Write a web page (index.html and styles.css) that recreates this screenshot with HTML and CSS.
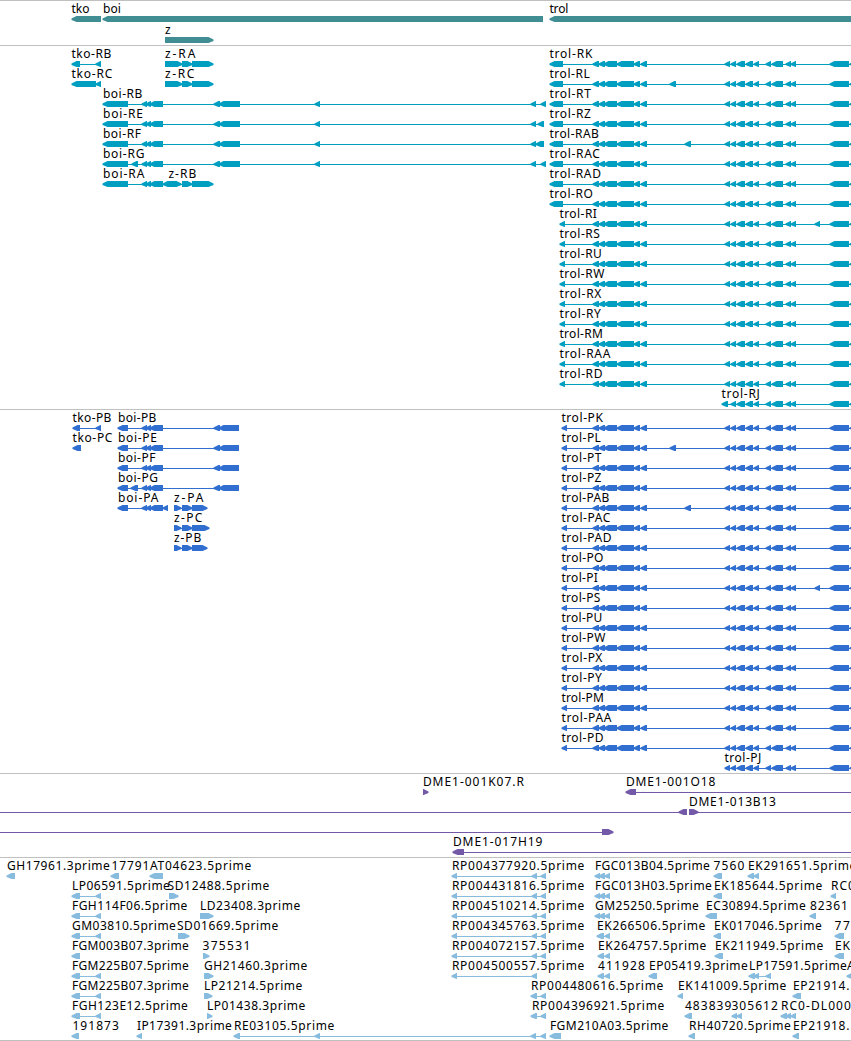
FILE: index.html
```
<!DOCTYPE html>
<html lang="en">
<head>
  <meta charset="UTF-8" />
  <title>Genome region: tko - trol</title>
  <link rel="stylesheet" href="styles.css">
</head>
<body>
  <div class="viewer">
    <div class="track genes" data-track="genes"></div>
    <div class="track transcripts" data-track="transcripts"></div>
    <div class="track proteins" data-track="proteins"></div>
    <div class="track clones" data-track="clones"></div>
    <div class="track ests" data-track="ests"></div>
  </div>
  <script src="tracks.js"></script>
</body>
</html>
```
FILE: styles.css
```
body {
  margin: 0;
  background: #fff;
  overflow: hidden;
}
.viewer {
  width: 851px;
  height: 1041px;
  overflow: hidden;
}
.track {
  box-sizing: border-box;
  border-top: 1px solid #c0c0c0;
  overflow: hidden;
}
.track svg {
  display: block;
}
.genes {
  height: 45px;
  color: #408e94;
}
.transcripts {
  height: 364px;
  color: #009fc1;
}
.proteins {
  height: 364px;
  color: #306fd0;
}
.clones {
  height: 84px;
  color: #7459a8;
}
.ests {
  height: 184px;
  color: #88bcdf;
  border-bottom: 1px solid #c0c0c0;
}
.label {
  font-family: "Noto Sans", "Open Sans", sans-serif;
  font-size: 12px;
  fill: #000;
}
.line {
  fill: currentColor;
  shape-rendering: crispEdges;
}
.block {
  fill: currentColor;
}
```
FILE: tracks.js
```
// feature: [row, label, label x, label width, direction, blocks]
var MID = " 593-599 599-605 604-617 617-634 634-640 641-647 ";
var TAIL = " 731-736 737-745 746-753 754-759 766-771 772-783 786-791 791-796 830-849 850-858";
var REST = " 725-730" + TAIL;

var tracks = {
  genes: [
    [0, "tko", 72, 18, "<", "72-101"],
    [0, "boi", 103.5, 18, "<", "103-543"],
    [0, "trol", 550, 19, "<", "550-860"],
    [1, "z", 165.5, 6, ">", "165-213"]
  ],
  transcripts: [
    [0, "tko-RB", 72, 40, "<", "72-80 96-101"],
    [0, "z-RA", 165.5, 30.5, ">", "165-182 182-192 192-213"],
    [1, "tko-RC", 72, 41, "<", "72-96 96-101"],
    [1, "z-RC", 165.5, 29.5, ">", "165-182 182-192 192-213"],
    [2, "boi-RB", 103.5, 39.5, "<", "103-128 142-147 146-151 150-163 214-220 219-240 315-320 531-536 541-546"],
    [3, "boi-RE", 103.5, 40, "<", "103-128 142-147 146-151 150-163 214-220 219-240 315-320 531-536 538-544"],
    [4, "boi-RF", 103.5, 38, "<", "103-128 142-147 146-151 150-163 214-220 219-240 315-320 531-536 536-544"],
    [5, "boi-RG", 103.5, 41.5, "<", "103-128 132-138 142-147 146-151 150-163 214-220 219-240 315-320 531-536 541-546"],
    [6, "boi-RA", 103.5, 41.5, "<", "103-128 142-147 146-151 150-163 163-170"],
    [6, "z-RB", 169, 28, ">", "168-181 182-192 192-213"]
  ],
  proteins: [
    [0, "tko-PB", 73, 39, "<", "73-80 96-101"],
    [1, "tko-PC", 73, 40, "<", "73-81"],
    [0, "boi-PB", 118.5, 38.5, "<", "118-128 142-147 146-151 150-163 214-220 219-239"],
    [1, "boi-PE", 118.5, 39, "<", "118-128 142-147 146-151 150-163 214-220 219-239"],
    [2, "boi-PF", 118.5, 37.5, "<", "118-128 142-147 146-151 150-163 214-220 219-239"],
    [3, "boi-PG", 118.5, 40, "<", "118-128 131-138 142-147 146-151 150-163 214-220 219-239"],
    [4, "boi-PA", 118.5, 40.5, "<", "118-128 142-147 146-151 150-163 163-168"],
    [4, "z-PA", 174.5, 29.5, ">", "174-181 182-192 192-207"],
    [5, "z-PC", 174.5, 28.5, ">", "174-181 182-192 192-209"],
    [6, "z-PB", 174.5, 27.5, ">", "174-181 182-192 192-207"]
  ],
  clones: [
    [0, "DME1-001K07.R", 423.5, 101, ">", "423-428"],
    [0, "DME1-001O18", 626.5, 89.5, "<", "626-636 900-905"],
    [1, "", 0, 0, "<", "-20--15 679-687"],
    [1, "DME1-013B13", 689.5, 87, ">", "689-698 900-905"],
    [2, "", 0, 0, ">", "-20--15 602-613"],
    [3, "DME1-017H19", 453.5, 89.5, "<", "453-464 900-905"]
  ],
  ests: [
    [0, "GH17961.3prime", 7.5, 103, "<", "7-15"],
    [0, "17791", 112, 38, "<", "111-119"],
    [0, "AT04623.5prime", 150.5, 101.5, "<", "150-163"],
    [0, "RP004377920.5prime", 452.5, 132.5, "<", "452-457 532-537 541-546"],
    [0, "FGC013B04.5prime", 595.5, 115, "<", "595-600 599-605 605-610"],
    [0, "7560", 714, 31, "<", "714-722"],
    [0, "EK291651.5prime", 748.5, 108.5, "<", "748-754 754-759"],
    [1, "LP06591.5prime", 72.5, 98, "<", "72-80 96-101"],
    [1, "SD12488.5prime", 168, 102, ">", "169-178"],
    [1, "RP004431816.5prime", 452.5, 132.5, "<", "452-457 532-537 541-546"],
    [1, "FGC013H03.5prime", 595.5, 117, "<", "595-600 599-605 605-610"],
    [1, "EK185644.5prime", 714.5, 108.5, "<", "714-722"],
    [1, "RC0", 831.5, 24, "<", "831-836"],
    [2, "FGH114F06.5prime", 72.5, 115.5, "<", "72-80 96-101"],
    [2, "LD23408.3prime", 200.5, 100.5, ">", "200-213"],
    [2, "RP004510214.5prime", 452.5, 132.5, "<", "452-457 532-537 541-546"],
    [2, "GM25250.5prime", 595.5, 104, "<", "595-600 599-605 605-610"],
    [2, "EC30894.5prime", 706.5, 100, "<", "706-717"],
    [2, "82361", 810.5, 38, "<", "810-816"],
    [3, "GM03810.5prime", 72.5, 104, "<", "72-80 96-101"],
    [3, "SD01669.5prime", 177.5, 101.5, ">", "178-189"],
    [3, "RP004345763.5prime", 452.5, 132.5, "<", "452-457 532-537 541-546"],
    [3, "EK266506.5prime", 597.5, 108.5, "<", "597-604 605-610"],
    [3, "EK017046.5prime", 714.5, 108, "<", "714-721"],
    [3, "77", 835, 15.5, "<", "835-844"],
    [4, "FGM003B07.3prime", 72.5, 117, "<", "72-80"],
    [4, "375531", 203, 48, ">", "203-209"],
    [4, "RP004072157.5prime", 452.5, 132.5, "<", "452-457 532-537 541-546"],
    [4, "EK264757.5prime", 598.5, 108.5, "<", "598-604 605-610"],
    [4, "EK211949.5prime", 715.5, 108.5, "<", "715-723"],
    [4, "EK", 835.5, 15, "<", "835-844"],
    [5, "FGM225B07.5prime", 72.5, 117, "<", "72-80 96-101"],
    [5, "GH21460.3prime", 204.5, 103.5, ">", "204-213"],
    [5, "RP004500557.5prime", 452.5, 132.5, "<", "452-457 532-537"],
    [5, "411928", 598.5, 47, "<", "598-604 605-610"],
    [5, "EP05419.3prime", 649.5, 99, "<", "649-657"],
    [5, "LP17591.5prime", 749.5, 98, "<", "749-755 754-759 766-771"],
    [5, "A", 847.5, 8, "<", "847-856"],
    [6, "FGM225B07.3prime", 72.5, 117, "<", "72-80 96-101"],
    [6, "LP21214.5prime", 204.5, 98.5, ">", "204-212"],
    [6, "RP004480616.5prime", 531.5, 132.5, "<", "531-537 541-546"],
    [6, "EK141009.5prime", 678.5, 108.5, "<", "678-683"],
    [6, "EP21914.", 793.5, 56.5, "<", "793-801"],
    [7, "FGH123E12.5prime", 72.5, 116, "<", "72-80 96-101"],
    [7, "LP01438.3prime", 207.5, 98.5, ">", "207-212"],
    [7, "RP004396921.5prime", 532.5, 132.5, "<", "531-537 541-546"],
    [7, "483839", 685.5, 46.5, "<", "685-692"],
    [7, "305612", 732, 46.5, "<", "732-737 737-742"],
    [7, "RC0-DL000", 781.5, 70, "<", "781-787 786-791 791-796"],
    [8, "191873", 73, 46.5, "<", "72-79"],
    [8, "IP17391.3prime", 137.5, 95, "<", "137-142"],
    [8, "RE03105.5prime", 234.5, 100.5, "<", "234-240 315-320 531-536 541-546"],
    [8, "FGM210A03.5prime", 550.5, 118.5, "<", "550-561"],
    [8, "RH40720.5prime", 689.5, 102, "<", "689-695"],
    [8, "EP21918.", 793.5, 56.5, "<", "793-799"]
  ]
};

// trol isoforms: name, label width, first block, extra block
var trolR = [
  ["RK", 43, "550-563"], ["RL", 40.5, "550-563", "670-676"], ["RT", 41.5, "550-563"],
  ["RZ", 41.5, "550-563"], ["RAB", 49.5, "550-563", "685-691"], ["RAC", 50.5, "550-563"],
  ["RAD", 51.5, "550-563"], ["RO", 43.5, "550-563"], ["RI", 37.5, "560-565", "815-820"],
  ["RS", 40.5, "560-565"], ["RU", 42.5, "560-565"], ["RW", 45, "560-565"],
  ["RX", 42, "560-565"], ["RY", 41.5, "560-565"], ["RM", 43.5, "560-565"],
  ["RAA", 51, "560-565"], ["RD", 43, "560-565"]
];
var trolP = [
  ["PK", 41.5], ["PL", 39.5, "", "670-676"], ["PT", 40], ["PZ", 40],
  ["PAB", 48, "", "685-691"], ["PAC", 49], ["PAD", 50], ["PO", 42],
  ["PI", 36.5, "", "815-820"], ["PS", 39], ["PU", 41], ["PW", 44],
  ["PX", 41], ["PY", 40.5], ["PM", 42.5], ["PAA", 50], ["PD", 42]
];
trolR.forEach(function (t, i) {
  var x = parseInt(t[2], 10);
  tracks.transcripts.push([i, "trol-" + t[0], x, t[1], "<", t[2] + MID + (t[3] || "") + REST]);
});
tracks.transcripts.push([17, "trol-RJ", 722, 38.5, "<", "722-728" + TAIL]);
trolP.forEach(function (t, i) {
  tracks.proteins.push([i, "trol-" + t[0], 562, t[1], "<", "562-567" + MID + (t[3] || "") + REST]);
});
tracks.proteins.push([17, "trol-PJ", 725, 37, "<", "725-730" + TAIL]);

// box with a blunt arrow head at one end
function block(a, b, y, dir) {
  var head = Math.min(5, b - a);
  var tip = dir === "<" ? a - 0.5 : b + 0.5;
  var neck = dir === "<" ? a + head - 0.5 : b - head + 0.5;
  var back = dir === "<" ? b : a;
  var pts = [[tip, y + 2.4], [neck, y], [back, y], [back, y + 6], [neck, y + 6], [tip, y + 4]];
  return '<polygon class="block" points="' + pts.join(" ") + '"/>';
}

document.querySelectorAll(".track").forEach(function (el) {
  var name = el.dataset.track;
  var pitch = name === "genes" ? 21 : 20;
  var html = "";
  tracks[name].forEach(function (f) {
    var y = 15 + f[0] * pitch;
    var blocks = f[5].trim().split(/\s+/).map(function (s) {
      var m = s.match(/^(-?\d+)-(-?\d+)$/);
      return [+m[1], +m[2]];
    });
    var start = blocks[0][0];
    var end = blocks[blocks.length - 1][1];
    if (blocks.length > 1) {
      html += '<rect class="line" x="' + (start + 2) + '" y="' + (y + 3) + '" width="' + (end - start - 4) + '" height="1"/>';
    }
    blocks.forEach(function (b) {
      html += block(b[0], b[1], y, f[4]);
    });
    if (f[1]) {
      html += '<text class="label" x="' + (f[2] - 0.6) + '" y="' + (y - 3) + '" textLength="' + f[3] + '">' + f[1] + '</text>';
    }
  });
  el.innerHTML = '<svg width="851" height="' + el.clientHeight + '">' + html + '</svg>';
});
```
